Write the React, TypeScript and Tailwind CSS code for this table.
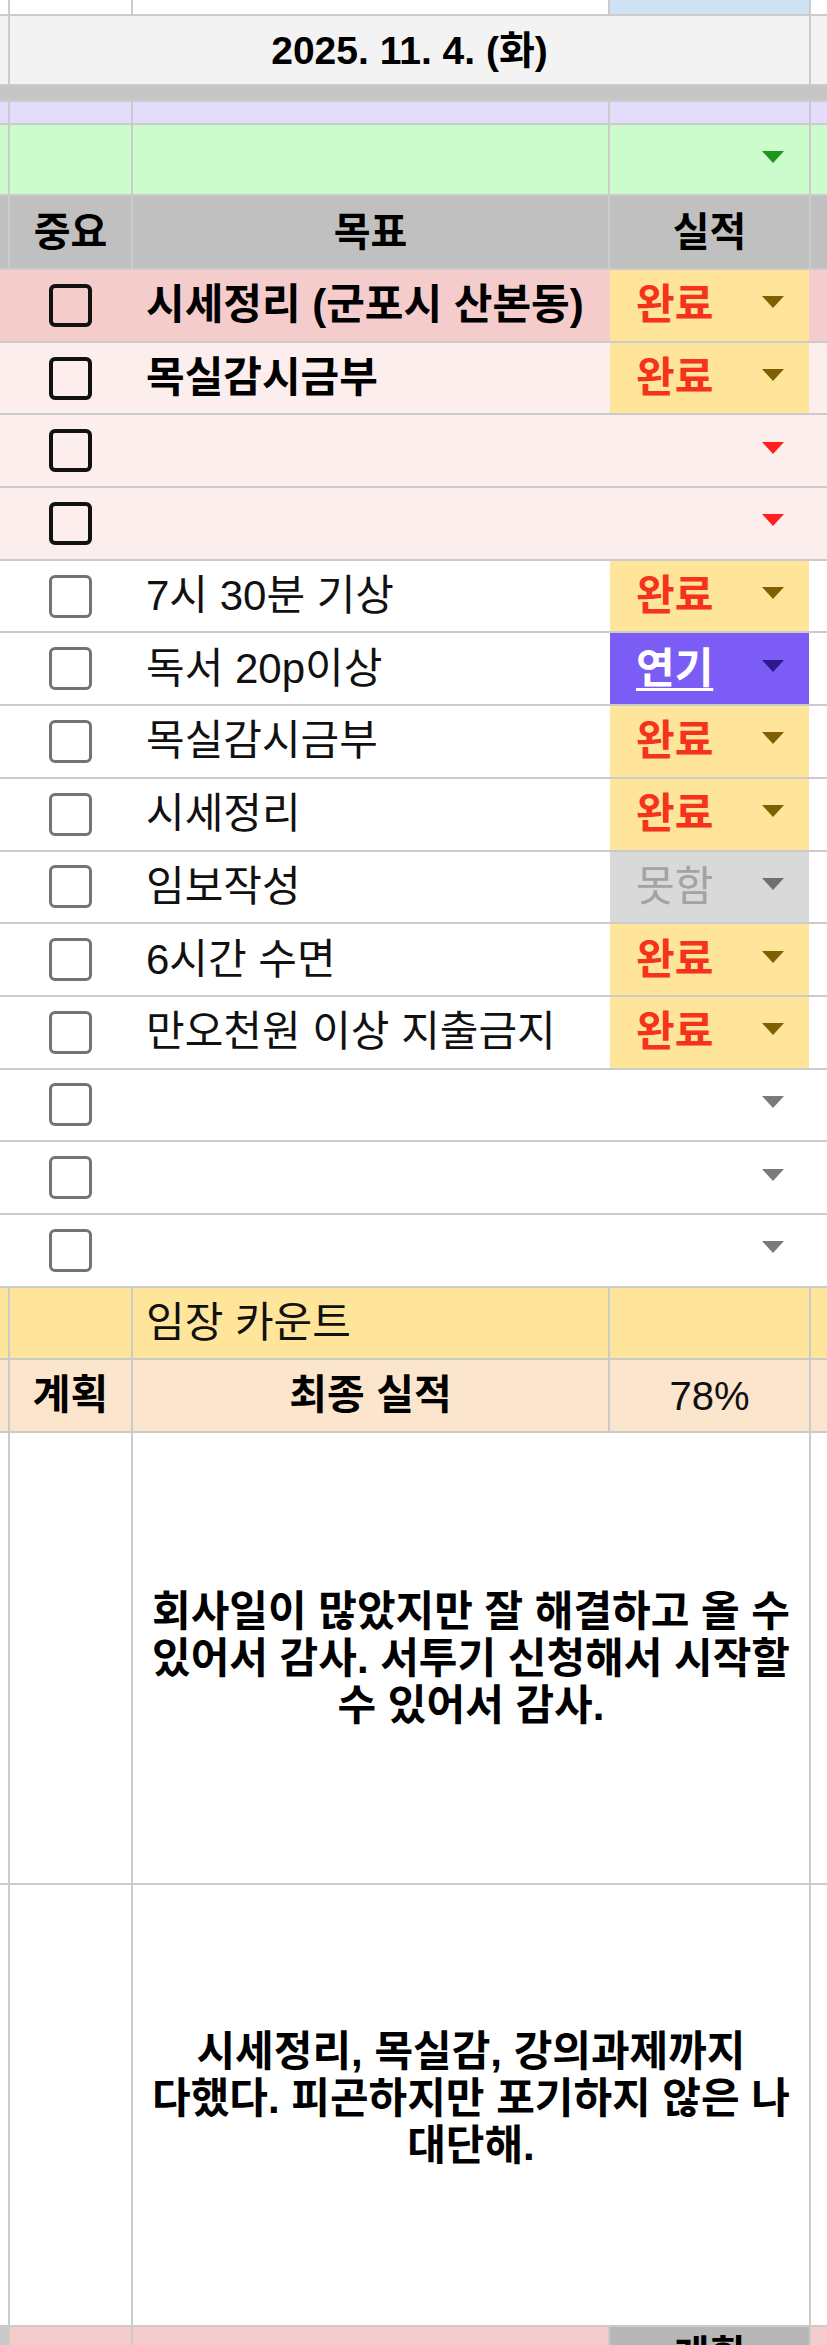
import React from "react";

const ROW = "grid grid-cols-[8px_121px_475px_199px_16px] gap-x-[2px]";

function Tri({ color }: { color: string }) {
  return (
    <svg width="22" height="12" viewBox="0 0 22 12" className="mb-[6px] shrink-0">
      <polygon points="0,0 22,0 11,12" fill={color} />
    </svg>
  );
}

function Box({ bold }: { bold: boolean }) {
  return bold ? (
    <div className="w-[43px] h-[43px] rounded-[6px] border-[4px] border-[#111]" />
  ) : (
    <div className="w-[43px] h-[43px] rounded-[6px] border-[3px] border-[#737373]" />
  );
}

type Status = "done" | "delay" | "fail" | "empty-red" | "empty";

function StatusCell({ s }: { s: Status }) {
  if (s === "done")
    return (
      <div className="bg-[#ffe599] flex items-center justify-between pl-[26px] pr-[25px]">
        <span className="font-bold text-[#f5321c]">완료</span>
        <Tri color="#7f6000" />
      </div>
    );
  if (s === "delay")
    return (
      <div className="bg-[#7b5cf5] flex items-center justify-between pl-[26px] pr-[25px]">
        <span className="font-bold text-white underline underline-offset-[5px] decoration-[3px]">연기</span>
        <Tri color="#2a1a8c" />
      </div>
    );
  if (s === "fail")
    return (
      <div className="bg-[#d9d9d9] flex items-center justify-between pl-[26px] pr-[25px]">
        <span className="text-[#a3a3a3]">못함</span>
        <Tri color="#707070" />
      </div>
    );
  if (s === "empty-red")
    return (
      <div className="flex items-center justify-end pr-[25px]">
        <Tri color="#ff1f1f" />
      </div>
    );
  return (
    <div className="bg-white flex items-center justify-end pr-[25px]">
      <Tri color="#7a7a7a" />
    </div>
  );
}

type Task = { text: string; bold: boolean; bg: string; status: Status };

const tasks: Task[] = [
  { text: "시세정리 (군포시 산본동)", bold: true, bg: "bg-[#f4cccc]", status: "done" },
  { text: "목실감시금부", bold: true, bg: "bg-[#fdeeee]", status: "done" },
  { text: "", bold: true, bg: "bg-[#fdeeee]", status: "empty-red" },
  { text: "", bold: true, bg: "bg-[#fdeeee]", status: "empty-red" },
  { text: "7시 30분 기상", bold: false, bg: "bg-white", status: "done" },
  { text: "독서 20p이상", bold: false, bg: "bg-white", status: "delay" },
  { text: "목실감시금부", bold: false, bg: "bg-white", status: "done" },
  { text: "시세정리", bold: false, bg: "bg-white", status: "done" },
  { text: "임보작성", bold: false, bg: "bg-white", status: "fail" },
  { text: "6시간 수면", bold: false, bg: "bg-white", status: "done" },
  { text: "만오천원 이상 지출금지", bold: false, bg: "bg-white", status: "done" },
  { text: "", bold: false, bg: "bg-white", status: "empty" },
  { text: "", bold: false, bg: "bg-white", status: "empty" },
  { text: "", bold: false, bg: "bg-white", status: "empty" },
];

function TaskRow({ t }: { t: Task }) {
  return (
    <div className={`${ROW} h-[70.69px] shrink-0 ${t.bg}`}>
      <div className={t.bg} />
      <div className={`${t.bg} flex items-center justify-center`}>
        <Box bold={t.bold} />
      </div>
      <div className={`${t.bg} flex items-center pl-[13px] whitespace-nowrap ${t.bold ? "font-bold text-black" : "text-[#111]"}`}>
        {t.text}
      </div>
      <div className={`${t.bg} grid`}>
        <StatusCell s={t.status} />
      </div>
      <div className={t.bg} />
    </div>
  );
}

export default function App() {
  return (
    <div className="w-[827px] h-[2345px] overflow-hidden bg-[#cbcbcb] flex flex-col gap-y-[2px] text-[42px] leading-none font-['Liberation_Sans','Noto_Sans_CJK_KR',sans-serif]">
      {/* top partial row */}
      <div className={`${ROW} h-[14px] shrink-0`}>
        <div className="bg-white" />
        <div className="bg-white" />
        <div className="bg-white" />
        <div className="bg-[#cfe2f3]" />
        <div className="bg-white" />
      </div>
      {/* date row */}
      <div className={`${ROW} h-[68px] shrink-0`}>
        <div className="bg-[#f3f3f3]" />
        <div className="col-span-3 bg-[#f3f3f3] flex items-center justify-center font-bold text-[39px] text-black">
          2025. 11. 4. (화)
        </div>
        <div className="bg-[#f3f3f3]" />
      </div>
      {/* thick separator */}
      <div className="h-[14px] shrink-0 bg-[#c6c6c6]" />
      {/* purple row */}
      <div className={`${ROW} h-[21px] shrink-0`}>
        <div className="bg-[#e3ddfb]" />
        <div className="bg-[#e3ddfb]" />
        <div className="bg-[#e3ddfb]" />
        <div className="bg-[#e3ddfb]" />
        <div className="bg-[#e3ddfb]" />
      </div>
      {/* green row */}
      <div className={`${ROW} h-[69px] shrink-0`}>
        <div className="bg-[#ccfccc]" />
        <div className="bg-[#ccfccc]" />
        <div className="bg-[#ccfccc]" />
        <div className="bg-[#ccfccc] flex items-center justify-end pr-[25px]">
          <Tri color="#1b951b" />
        </div>
        <div className="bg-[#ccfccc]" />
      </div>
      {/* header row */}
      <div className={`${ROW} h-[72px] shrink-0 font-bold text-black text-[40px]`}>
        <div className="bg-[#c0c0c0]" />
        <div className="bg-[#c0c0c0] flex items-center justify-center">중요</div>
        <div className="bg-[#c0c0c0] flex items-center justify-center">목표</div>
        <div className="bg-[#c0c0c0] flex items-center justify-center">실적</div>
        <div className="bg-[#c0c0c0]" />
      </div>
      {tasks.map((t, i) => (
        <TaskRow key={i} t={t} />
      ))}
      {/* 임장 카운트 */}
      <div className={`${ROW} h-[70.69px] shrink-0`}>
        <div className="bg-[#ffe599]" />
        <div className="bg-[#ffe599]" />
        <div className="bg-[#ffe599] flex items-center pl-[13px] text-[#111]">임장 카운트</div>
        <div className="bg-[#ffe599]" />
        <div className="bg-[#ffe599]" />
      </div>
      {/* 계획 / 최종 실적 */}
      <div className={`${ROW} h-[70.69px] shrink-0 text-[41px]`}>
        <div className="bg-[#fce5cd]" />
        <div className="bg-[#fce5cd] flex items-center justify-center font-bold text-black">계획</div>
        <div className="bg-[#fce5cd] flex items-center justify-center font-bold text-black">최종 실적</div>
        <div className="bg-[#fce5cd] flex items-center justify-center text-[#111] text-[40px]">78%</div>
        <div className="bg-[#fce5cd]" />
      </div>
      {/* big cell 1 */}
      <div className={`${ROW} h-[450px] shrink-0`}>
        <div className="bg-white" />
        <div className="bg-white" />
        <div className="col-span-2 bg-white flex items-center justify-center text-center font-bold text-black leading-[47px] whitespace-nowrap">
          <p>
            회사일이 많았지만 잘 해결하고 올 수<br />
            있어서 감사. 서투기 신청해서 시작할<br />
            수 있어서 감사.
          </p>
        </div>
        <div className="bg-white" />
      </div>
      {/* big cell 2 */}
      <div className={`${ROW} h-[440px] shrink-0`}>
        <div className="bg-white" />
        <div className="bg-white" />
        <div className="col-span-2 bg-white flex items-center justify-center text-center font-bold text-black leading-[47px] whitespace-nowrap">
          <p className="mb-[14px]">
            시세정리, 목실감, 강의과제까지<br />
            다했다. 피곤하지만 포기하지 않은 나<br />
            대단해.
          </p>
        </div>
        <div className="bg-white" />
      </div>
      {/* bottom partial row */}
      <div className={`${ROW} h-[18px] shrink-0 overflow-hidden`}>
        <div className="bg-[#c9c9c9]" />
        <div className="bg-[#f4cccc]" />
        <div className="bg-[#f4cccc]" />
        <div className="bg-[#b7b7b7] flex items-start justify-center pt-[8px] font-bold text-black text-[39px] overflow-hidden">
          계획
        </div>
        <div className="bg-[#f4cccc]" />
      </div>
    </div>
  );
}
